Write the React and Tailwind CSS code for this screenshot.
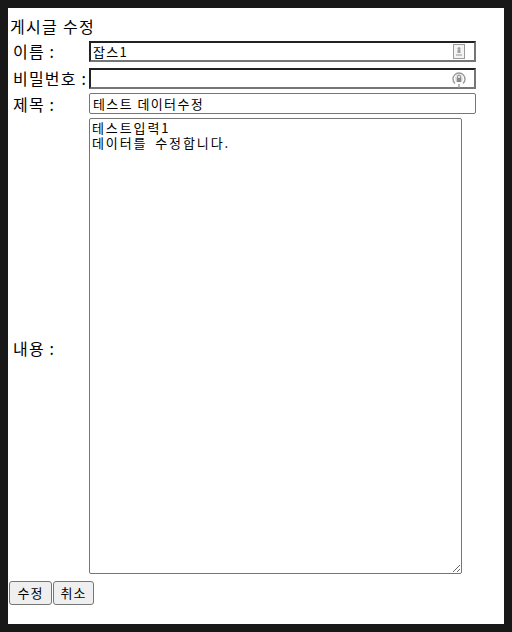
import React from 'react';

export default function App() {
    return (
        <div className="h-[632px] bg-[#181818] p-2 font-['Noto_Sans_CJK_KR','Liberation_Sans',sans-serif] text-black">
            <div className="h-[616px] bg-white">
                <div className="pt-[8px] pl-[2px] h-[33px] text-base leading-[20px] tracking-[1.3px]">게시글 수정</div>
                <form className="flex flex-col">
                    <div className="flex items-center h-[21px]">
                        <label className="w-[81px] pl-[5px] pb-[2px] text-base tracking-[1.2px]">이름 :</label>
                        <div className="relative">
                            <input
                                type="text"
                                defaultValue="잡스1"
                                className="block w-[387px] h-[21px] border-2 border-t-[#222222] border-l-[#222222] border-r-[#767676] border-b-[#767676] px-[2px] text-[13px] tracking-[1.3px] outline-none"
                            />
                            <svg className="absolute right-[11px] top-[3px]" width="12" height="15" viewBox="0 0 12 15">
                                <rect x="0.5" y="0.5" width="11" height="14" fill="#f4f4f4" stroke="#9a9a9a" />
                                <circle cx="6" cy="4.5" r="1.5" fill="#a0a0a0" />
                                <path d="M4.5 6h3v3h-3z" fill="#a0a0a0" />
                                <path d="M3 10h6v2H3z" fill="#c4c4c4" />
                            </svg>
                        </div>
                    </div>
                    <div className="flex items-center h-[21px] mt-[6px]">
                        <label className="w-[81px] pl-[5px] pb-[2px] text-base tracking-[1.2px] whitespace-nowrap">비밀번호 :</label>
                        <div className="relative">
                            <input
                                type="password"
                                className="block w-[387px] h-[21px] border-2 border-t-[#222222] border-l-[#222222] border-r-[#767676] border-b-[#767676] px-[2px] text-[13px] outline-none"
                            />
                            <svg className="absolute right-[10px] top-[3px]" width="14" height="17" viewBox="0 0 14 17">
                                <path d="M3 12.5A6 6 0 1 1 11 12.5" fill="none" stroke="#999999" strokeWidth="1.4" />
                                <circle cx="7" cy="7.5" r="4" fill="#e2e2e2" />
                                <path d="M4.8 7h4.4v4H4.8z" fill="#8a8a8a" />
                                <path d="M5.5 7V5.5a1.5 1.5 0 0 1 3 0V7" fill="none" stroke="#8a8a8a" />
                                <path d="M7 13v4" stroke="#999999" strokeWidth="1.4" />
                            </svg>
                        </div>
                    </div>
                    <div className="flex items-center h-[21px] mt-1">
                        <label className="w-[81px] pl-[5px] text-base tracking-[1.2px]">제목 :</label>
                        <input
                            type="text"
                            defaultValue="테스트 데이터수정"
                            className="block w-[387px] h-[21px] border border-[#767676] rounded-[2px] px-[3px] text-[13px] tracking-[1.4px] outline-none"
                        />
                    </div>
                    <div className="flex items-center mt-1">
                        <label className="w-[81px] pl-[5px] pt-[3px] text-base tracking-[1.2px]">내용 :</label>
                        <textarea
                            defaultValue={'테스트입력1\n데이터를 수정합니다.'}
                            className="block w-[373px] h-[456px] border border-[#767676] rounded-[2px] px-[2px] pt-[1px] text-[13px] leading-[15px] tracking-[1.9px] [word-spacing:3px] outline-none"
                        />
                    </div>
                    <div className="flex mt-[7px] ml-[1px] gap-[1px]">
                        <button type="button" className="w-[43px] h-[24px] bg-[#efefef] border border-[#767676] rounded-[3px] text-[13px] tracking-[1px]">수정</button>
                        <button type="button" className="w-[41px] h-[24px] bg-[#efefef] border border-[#767676] rounded-[3px] text-[13px] tracking-[1px]">취소</button>
                    </div>
                </form>
            </div>
        </div>
    );
}
